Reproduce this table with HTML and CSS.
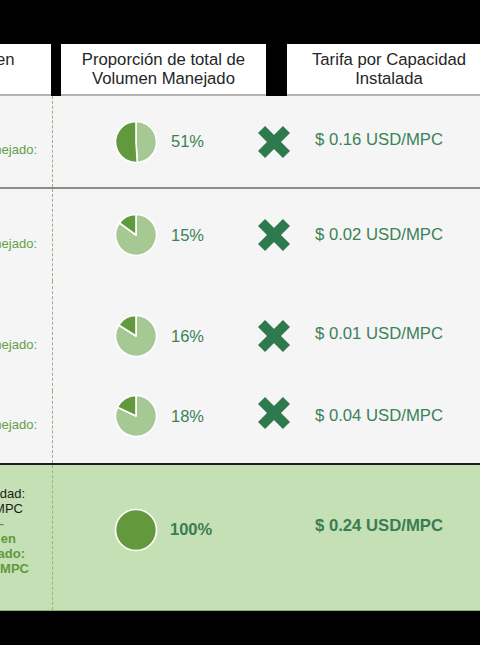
FILE: index.html
```html
<!DOCTYPE html>
<html lang="es">
<head>
<meta charset="utf-8">
<title>Tarifas</title>
<link rel="stylesheet" href="styles.css">
</head>
<body>
<div class="slide">
  <div class="head">
    <div class="hbox hbox-a"><span class="cut">en</span></div>
    <div class="hbox hbox-b">Proporción de total de<br>Volumen Manejado</div>
    <div class="hbox hbox-c">Tarifa por Capacidad<br>Instalada</div>
  </div>

  <div class="table">
    <div class="row row-1">
      <div class="lbl"><span>nejado:</span></div>
      <div class="cells">
        <svg class="pie" viewBox="0 0 44 44" width="44" height="44">
          <path class="light" d="M22 22 L23.29 42.46 A20.5 20.5 0 0 0 22 1.5 Z"/>
          <path class="dark" d="M22 22 L22 1.5 A20.5 20.5 0 1 0 23.29 42.46 Z"/>
        </svg>
        <span class="pct">51%</span>
        <svg class="x" viewBox="0 0 32 32" width="32" height="32"><g transform="rotate(45 16 16)"><rect x="11" y="-1.6" width="10" height="35.2"/><rect x="-1.6" y="11" width="35.2" height="10"/></g></svg>
        <span class="rate rate-up">$ 0.16 USD/MPC</span>
      </div>
    </div>

    <div class="group">
      <div class="row row-2">
        <div class="lbl"><span>nejado:</span></div>
        <div class="cells">
          <svg class="pie" viewBox="0 0 44 44" width="44" height="44">
            <path class="light" d="M22 22 L5.42 9.95 A20.5 20.5 0 1 0 22 1.5 Z"/>
            <path class="dark" d="M22 22 L22 1.5 A20.5 20.5 0 0 0 5.42 9.95 Z"/>
          </svg>
          <span class="pct">15%</span>
          <svg class="x" viewBox="0 0 32 32" width="32" height="32"><g transform="rotate(45 16 16)"><rect x="11" y="-1.6" width="10" height="35.2"/><rect x="-1.6" y="11" width="35.2" height="10"/></g></svg>
          <span class="rate">$ 0.02 USD/MPC</span>
        </div>
      </div>
      <div class="row row-3">
        <div class="lbl"><span>nejado:</span></div>
        <div class="cells">
          <svg class="pie" viewBox="0 0 44 44" width="44" height="44">
            <path class="light" d="M22 22 L4.69 11.02 A20.5 20.5 0 1 0 22 1.5 Z"/>
            <path class="dark" d="M22 22 L22 1.5 A20.5 20.5 0 0 0 4.69 11.02 Z"/>
          </svg>
          <span class="pct">16%</span>
          <svg class="x" viewBox="0 0 32 32" width="32" height="32"><g transform="rotate(45 16 16)"><rect x="11" y="-1.6" width="10" height="35.2"/><rect x="-1.6" y="11" width="35.2" height="10"/></g></svg>
          <span class="rate rate-up">$ 0.01 USD/MPC</span>
        </div>
      </div>
      <div class="row row-4">
        <div class="lbl"><span>nejado:</span></div>
        <div class="cells">
          <svg class="pie" viewBox="0 0 44 44" width="44" height="44">
            <path class="light" d="M22 22 L3.45 13.27 A20.5 20.5 0 1 0 22 1.5 Z"/>
            <path class="dark" d="M22 22 L22 1.5 A20.5 20.5 0 0 0 3.45 13.27 Z"/>
          </svg>
          <span class="pct">18%</span>
          <svg class="x x-up" viewBox="0 0 32 32" width="32" height="32"><g transform="rotate(45 16 16)"><rect x="11" y="-1.6" width="10" height="35.2"/><rect x="-1.6" y="11" width="35.2" height="10"/></g></svg>
          <span class="rate">$ 0.04 USD/MPC</span>
        </div>
      </div>
    </div>
  </div>

  <div class="row total">
    <div class="lbl tlbl">
      <span class="t1">dad:</span>
      <span class="t2">MPC</span>
      <span class="g t3">–</span>
      <span class="g t4">en</span>
      <span class="g t5">ado:</span>
      <span class="g t6">MPC</span>
    </div>
    <div class="cells">
      <svg class="pie" viewBox="0 0 44 44" width="44" height="44">
        <circle class="dark" cx="22" cy="22" r="20.5"/>
      </svg>
      <span class="pct bold">100%</span>
      <span class="rate bold rate-total">$ 0.24 USD/MPC</span>
    </div>
  </div>
</div>
</body>
</html>
```

FILE: styles.css
```css
html, body {
  margin: 0;
  padding: 0;
  background: #000;
}

body {
  width: 480px;
  height: 645px;
  overflow: hidden;
  font-family: "Liberation Sans", Arial, sans-serif;
}

.slide {
  width: 491px;
  padding-top: 44px;
}

/* header */
.head {
  display: flex;
  height: 52px;
}

.hbox {
  box-sizing: border-box;
  height: 52px;
  background: #fff;
  border-bottom: 2px solid #b4b4b4;
  padding-top: 6px;
  font-size: 16.7px;
  line-height: 19px;
  color: #262626;
  text-align: center;
  white-space: nowrap;
  overflow: hidden;
}

.hbox-a {
  width: 51px;
  margin-right: 10px;
  text-align: left;
}

.hbox-a .cut {
  display: inline-block;
  margin-left: -4px;
}

.hbox-b {
  width: 205px;
  margin-right: 21px;
}

.hbox-c {
  width: 204px;
}

/* table body */
.table {
  background: #f5f5f5;
  border-bottom: 2px solid #1e1e1e;
}

.row {
  display: flex;
}

.row-1 {
  height: 91px;
  border-bottom: 2px solid #8c8c8c;
}

.row-2 { height: 92px; }
.row-3 { height: 110px; }
.row-4 { height: 72px; }

.row-4 > .lbl,
.row-4 > .cells {
  padding-bottom: 22px;
}

.lbl {
  box-sizing: border-box;
  width: 52px;
  flex: none;
  display: flex;
  flex-direction: column;
  align-items: flex-end;
  justify-content: center;
  overflow: hidden;
  font-size: 13px;
  line-height: 15px;
  color: #64a044;
  white-space: nowrap;
}

.lbl > span {
  display: block;
}

.row-1 .lbl span,
.group .lbl span {
  margin-top: 16px;
  margin-right: 15px;
}

.cells {
  box-sizing: border-box;
  flex: 1;
  display: flex;
  align-items: center;
  border-left: 1px dashed #93b581;
}

.pie {
  display: block;
  flex: none;
  margin-left: 61px;
}

.pie path,
.pie circle {
  stroke: #fff;
  stroke-width: 1.6;
  stroke-linejoin: round;
}

.pie .dark { fill: #62993d; }
.pie .light { fill: #a6c893; }

.pct {
  width: 87px;
  margin-left: 13px;
  flex: none;
  font-size: 16.5px;
  color: #3b8257;
}

.x {
  display: block;
  flex: none;
  fill: #2e7a4e;
}

.x-up {
  margin-bottom: 7px;
}

.rate {
  margin-left: 25px;
  font-size: 16.7px;
  color: #3b8257;
  white-space: nowrap;
}

.rate-up {
  margin-bottom: 4px;
}

.bold {
  font-weight: bold;
  color: #3a7d52;
}

/* total row */
.total {
  height: 146px;
  box-sizing: border-box;
  background: #c5e0b4;
  border-bottom: 1px solid #8fae7c;
}

.total > .cells {
  padding-bottom: 16px;
}

.total .pct {
  margin-left: 12px;
}

.rate-total {
  margin-left: 58px;
  margin-bottom: 8px;
}

.tlbl {
  padding-bottom: 13px;
  color: #1a1a1a;
}

.tlbl .g {
  font-weight: bold;
  color: #5e9a3c;
}

.t1 { margin-right: 27px; }
.t2 { margin-right: 29px; }
.t3 { margin-right: 48px; }
.t4 { margin-right: 36px; }
.t5 { margin-right: 27px; }
.t6 { margin-right: 23px; }
```
